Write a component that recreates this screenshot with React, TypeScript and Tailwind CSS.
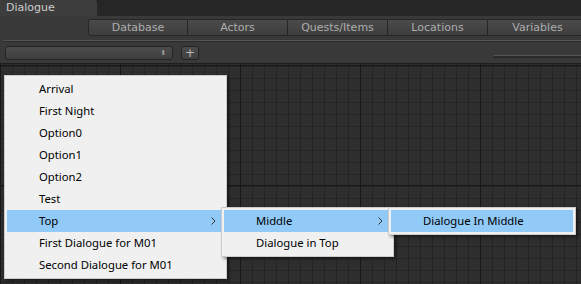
import React from "react";

const tabs = ["Database", "Actors", "Quests/Items", "Locations", "Variables"];

const items = [
  "Arrival",
  "First Night",
  "Option0",
  "Option1",
  "Option2",
  "Test",
  "Top",
  "First Dialogue for M01",
  "Second Dialogue for M01",
];

const Chevron = () => (
  <svg width="5" height="8" viewBox="0 0 5 8" className="text-[#333]">
    <path d="M0.5 0.5 L4 4 L0.5 7.5" fill="none" stroke="currentColor" strokeWidth="1" />
  </svg>
);

const Grid = () => (
  <svg className="absolute inset-0 w-full h-full" xmlns="http://www.w3.org/2000/svg">
    <defs>
      <pattern id="minor" width="12" height="12" patternUnits="userSpaceOnUse" y="1">
        <path d="M0 0.5 H12 M0.5 0 V12" stroke="#242424" strokeWidth="1" fill="none" />
      </pattern>
      <pattern id="major" width="120" height="120" patternUnits="userSpaceOnUse" y="1">
        <rect width="120" height="120" fill="url(#minor)" />
        <path d="M0 0.5 H120 M0.5 0 V120" stroke="#181818" strokeWidth="1" fill="none" />
      </pattern>
    </defs>
    <rect width="100%" height="100%" fill="#2e2e2e" />
    <rect width="100%" height="100%" fill="url(#major)" />
  </svg>
);

const menuBox =
  "absolute bg-[#f0f0f0] border border-[#cccccc] shadow-[2px_2px_3px_rgba(0,0,0,0.4)] py-[2px] font-['Noto_Sans',sans-serif] text-[11.3px] text-black";

export default function App() {
  return (
    <div className="w-[581px] h-[284px] overflow-hidden flex flex-col bg-[#393939] font-['DejaVu_Sans',sans-serif]">
      {/* window tab strip */}
      <div className="h-[16px] bg-[#262626] flex">
        <div className="w-[97px] h-full bg-[#3d3d3d] rounded-tr-[3px] text-[11px] leading-[16px] text-[#cccccc] pl-[6px]">
          Dialogue
        </div>
      </div>

      {/* toolbar */}
      <div className="h-[47px] flex flex-col">
        <div className="flex pl-[88px] pt-[3px]">
          {tabs.map((t, i) => (
            <div
              key={t}
              className={
                "w-[100px] shrink-0 h-[17px] border border-[#262626] bg-gradient-to-b from-[#4a4a4a] to-[#3e3e3e] text-[11px] leading-[15px] text-center text-[#adadad] " +
                (i === 0 ? "rounded-tl-[3px] rounded-bl-[3px]" : "border-l-0")
              }
            >
              {t}
            </div>
          ))}
        </div>
        <div className="mt-[4px] ml-[3px] h-[2px] bg-[#555] border-b border-[#2a2a2a]" />
        <div className="flex items-center mt-[4px] pl-[5px]">
          <div className="w-[168px] h-[14px] rounded-[3px] border border-[#242424] bg-gradient-to-b from-[#4c4c4c] to-[#3f3f3f] flex items-center justify-end pr-[6px]">
            <span className="text-[7px] leading-[7px] text-[#999]">⬍</span>
          </div>
          <div className="ml-[8px] w-[18px] h-[14px] rounded-[3px] border border-[#242424] bg-gradient-to-b from-[#4c4c4c] to-[#3f3f3f] text-[12px] leading-[12px] text-center text-[#bbb]">
            +
          </div>
          <div className="ml-auto mt-[6px] w-[88px] h-[3px] rounded-l-[2px] bg-[#2a2a2a] border-t border-[#555]" />
        </div>
      </div>

      {/* node canvas */}
      <div className="relative flex-1 border-t border-[#1e1e1e]">
        <Grid />

        {/* context menu */}
        <div className={menuBox + " left-[4px] top-[11px] w-[223px]"}>
          {items.map((it) => (
            <div
              key={it}
              className={
                "h-[22px] mx-[2px] flex items-center pl-[32px] pr-[8px] " + (it === "Top" ? "bg-[#91c9f7]" : "")
              }
            >
              <span className="flex-1">{it}</span>
              {it === "Top" && <Chevron />}
            </div>
          ))}
        </div>

        {/* submenu level 1 */}
        <div className={menuBox + " left-[221px] top-[143px] w-[173px]"}>
          <div className="h-[22px] mx-[2px] flex items-center pl-[32px] pr-[8px] bg-[#91c9f7]">
            <span className="flex-1">Middle</span>
            <Chevron />
          </div>
          <div className="h-[22px] mx-[2px] flex items-center pl-[32px] pr-[8px]">Dialogue in Top</div>
        </div>

        {/* submenu level 2 */}
        <div className={menuBox + " left-[388px] top-[143px] w-[188px]"}>
          <div className="h-[22px] mx-[2px] flex items-center pl-[32px] pr-[8px] bg-[#91c9f7]">Dialogue In Middle</div>
        </div>
      </div>
    </div>
  );
}
